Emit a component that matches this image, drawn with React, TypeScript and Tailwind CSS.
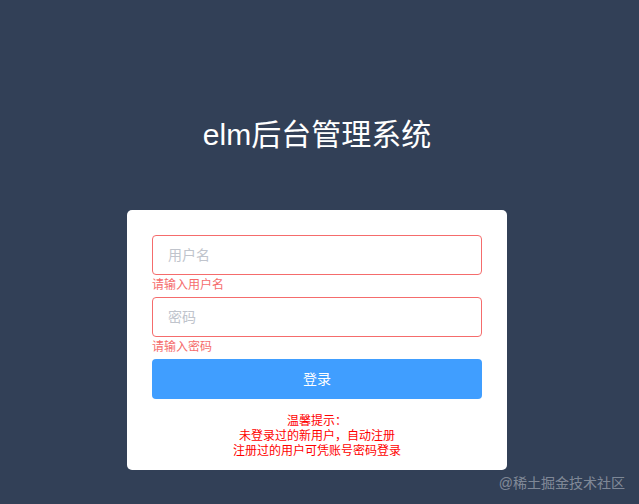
export default function App() {
  return (
    <div
      className="relative h-[504px] w-full overflow-hidden bg-[#324057]"
      style={{ fontFamily: '"Liberation Sans", "Noto Sans CJK SC", sans-serif' }}
    >
      <div className="flex flex-col items-center pt-[119px] pr-[5px]">
        <h1 className="text-[30px] leading-[32px] text-white">elm后台管理系统</h1>

        <div className="mt-[59px] w-[380px] rounded-[5px] bg-white px-[25px] pt-[25px] pb-[11px]">
          <div className="relative mb-[22px]">
            <input
              placeholder="用户名"
              className="h-[40px] w-full rounded-[4px] border border-[#f56c6c] px-[15px] text-[14px] text-[#606266] outline-none placeholder:text-[#c0c4cc]"
            />
            <div className="absolute left-0 top-full pt-[4px] text-[12px] leading-none text-[#f56c6c]">
              请输入用户名
            </div>
          </div>

          <div className="relative mb-[22px]">
            <input
              type="password"
              placeholder="密码"
              className="h-[40px] w-full rounded-[4px] border border-[#f56c6c] px-[15px] text-[14px] text-[#606266] outline-none placeholder:text-[#c0c4cc]"
            />
            <div className="absolute left-0 top-full pt-[4px] text-[12px] leading-none text-[#f56c6c]">
              请输入密码
            </div>
          </div>

          <button className="h-[40px] w-full rounded-[4px] bg-[#409eff] text-[14px] text-white">
            登录
          </button>

          <div className="mt-[15px] text-center text-[12px] leading-[15px] text-[#ff0000]">
            <p>温馨提示：</p>
            <p>未登录过的新用户，自动注册</p>
            <p>注册过的用户可凭账号密码登录</p>
          </div>
        </div>
      </div>

      <div className="absolute bottom-[14px] right-[14px] text-[14px] leading-none text-white/40">
        @稀土掘金技术社区
      </div>
    </div>
  );
}
